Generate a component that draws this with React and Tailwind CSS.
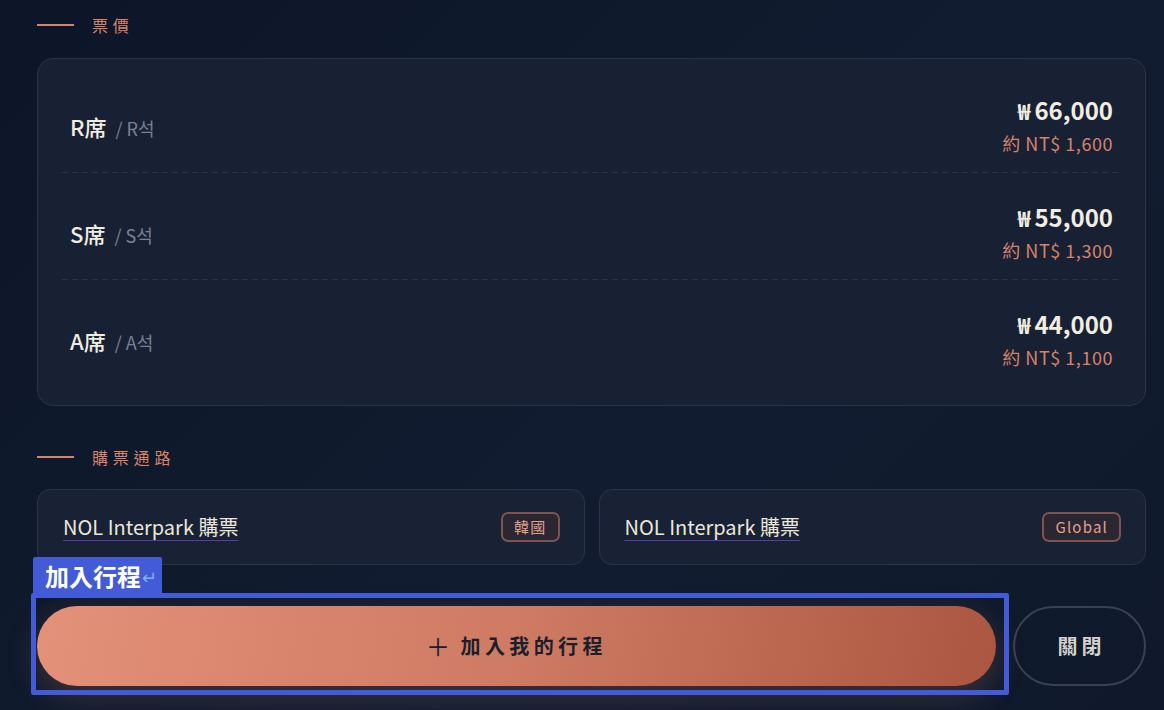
import React from "react";

const font = { fontFamily: '"Noto Sans CJK TC", "Noto Sans", sans-serif' };

function SectionHead({ children }) {
  return (
    <div className="flex h-[20px] items-center gap-[18px]">
      <div className="h-[2px] w-[37px] bg-[#d9826a]" />
      <div className="text-[16px] tracking-[0.3em] text-[#d9826a] leading-none">{children}</div>
    </div>
  );
}

const rows = [
  { seat: "R席", kr: "R석", won: "66,000", nt: "1,600" },
  { seat: "S席", kr: "S석", won: "55,000", nt: "1,300" },
  { seat: "A席", kr: "A석", won: "44,000", nt: "1,100" },
];

function Row({ r, last }) {
  return (
    <div>
      <div className="flex items-center justify-between px-[8px] pt-[28px] pb-[14px]">
        <div className="flex items-baseline gap-[9px]">
          <span className="text-[22px] font-medium text-[#f1ece0]">{r.seat}</span>
          <span className="text-[18px] text-[#788293]">/ {r.kr}</span>
        </div>
        <div className="flex h-[64px] flex-col items-end justify-center">
          <div className="flex items-center text-[24px] font-bold leading-[32px] text-[#f2ede1]">
            <span className="mr-[4px] text-[22px]">₩</span>
            <span>{r.won}</span>
          </div>
          <div className="mt-[2px] text-[18px] leading-[30px] tracking-[0.03em] text-[#d9826a]">約 NT$ {r.nt}</div>
        </div>
      </div>
      {!last && (
        <div className="h-px w-full bg-[linear-gradient(to_right,#2b3547_6px,transparent_6px)] bg-[length:10px_1px]" />
      )}
    </div>
  );
}

function Channel({ badge }) {
  return (
    <div className="flex h-[76px] flex-1 items-center justify-between rounded-[13px] border border-[#2a3446] bg-[#182234] pl-[25px] pr-[24px]">
      <span className="text-[20px] text-[#ece7dc] underline decoration-[#5a3aa6] decoration-1 underline-offset-[5px]">
        NOL Interpark 購票
      </span>
      <span className="flex h-[30px] items-center rounded-[7px] border-2 border-[#7c5450] bg-[#2a2632] px-[11px] text-[15px] tracking-[0.08em] text-[#e2a08e]">
        {badge}
      </span>
    </div>
  );
}

export default function App() {
  return (
    <div
      style={font}
      className="relative h-[710px] w-[1164px] overflow-hidden bg-[linear-gradient(135deg,#0d1628,#111c30_60%,#0f192b)] pl-[37px] pr-[18px] pt-[15px]"
    >
      <SectionHead>票價</SectionHead>

      <div className="mt-[23px] h-[348px] rounded-[16px] border border-[#2a3446] bg-[#172133] px-[24px] pt-[7px]">
        {rows.map((r, i) => (
          <Row key={r.seat} r={r} last={i === rows.length - 1} />
        ))}
      </div>

      <div className="mt-[41px]">
        <SectionHead>購票通路</SectionHead>
      </div>

      <div className="mt-[22px] flex gap-[14px]">
        <Channel badge="韓國" />
        <Channel badge="Global" />
      </div>

      <div className="relative mt-[41px] flex h-[80px] gap-[17px]">
        <button className="flex h-[80px] w-[959px] items-center justify-center rounded-full bg-[linear-gradient(100deg,#e4917a,#cf7a62_50%,#ab5640)] text-[20px] font-bold tracking-[0.22em] text-[#18202e] shadow-[0_10px_30px_rgba(200,120,100,0.25)]">
          <span className="mr-[6px] text-[24px] font-normal leading-none">＋</span>
          加入我的行程
        </button>
        <button className="flex h-[80px] w-[133px] items-center justify-center rounded-full border-2 border-[#384253] pl-[4px] text-[20px] font-bold tracking-[0.2em] text-[#d6d2ca]">
          關閉
        </button>

        <div className="pointer-events-none absolute left-[-6px] top-[-13px] h-[102px] w-[978px] rounded-[2px] border-[5px] border-[#435bd6]" />
        <div className="pointer-events-none absolute left-[-4px] top-[-49px] flex h-[37px] items-center rounded-t-[2px] bg-[#435bd6] pl-[12px] pr-[5px]">
          <span className="text-[24px] font-bold leading-none text-white">加入行程</span>
          <span className="ml-[1px] text-[18px] leading-none text-[#7fb0f5]">↵</span>
        </div>
      </div>
    </div>
  );
}
